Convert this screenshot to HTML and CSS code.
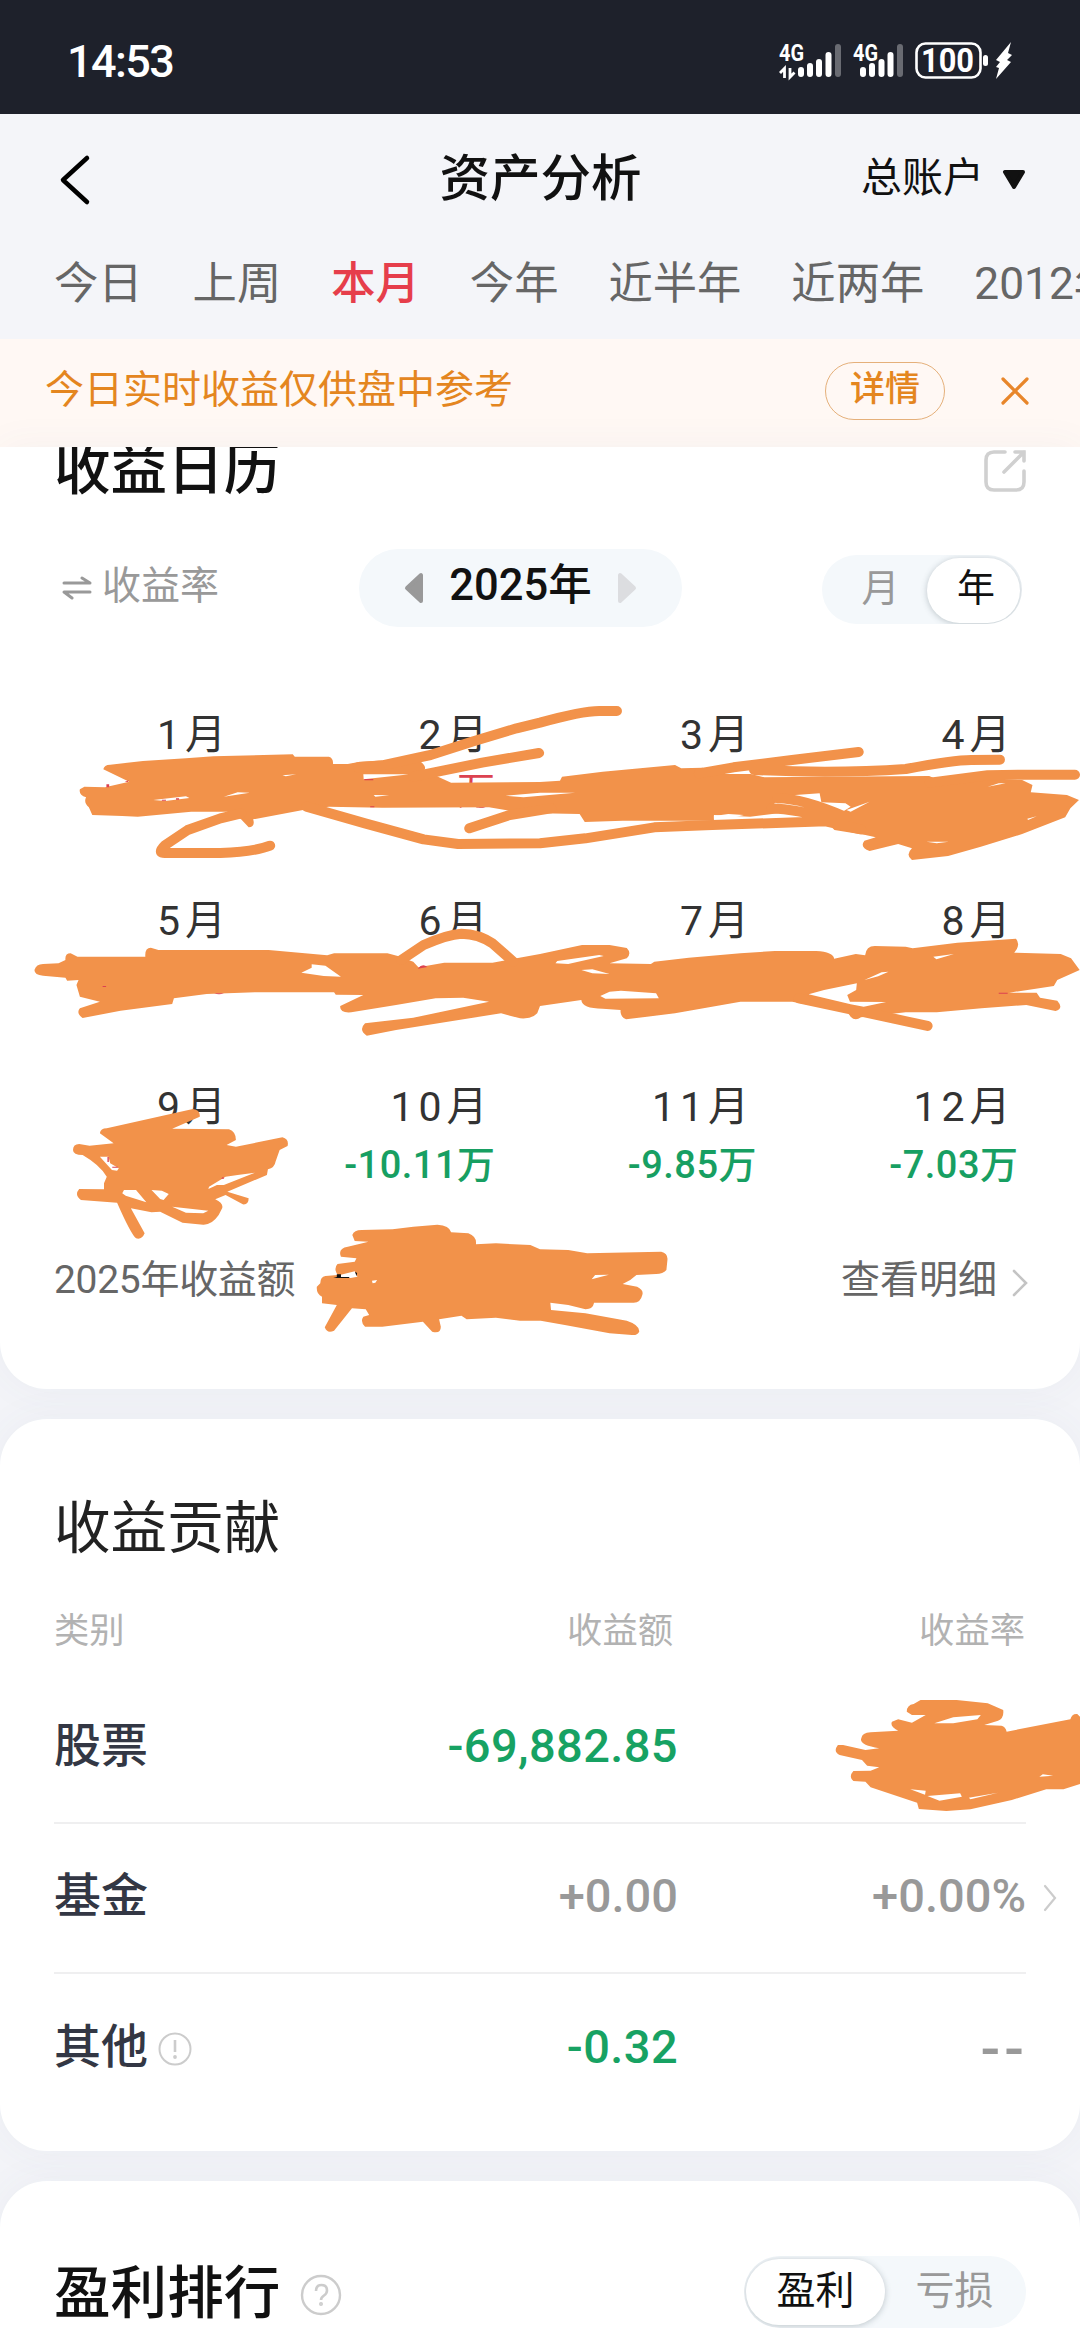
FILE: index.html
```html
<!DOCTYPE html>
<html lang="zh-CN">
<head>
	<meta charset="UTF-8">
	<title>资产分析</title>
	<link rel="stylesheet" href="styles.css">
</head>
<body>
	<div id="statusbar">
		<span class="clock">14:53</span>
		<svg class="phone" width="240" height="44" viewBox="776 38 240 44">
			<g fill="#fff" font-family="Roboto" font-weight="700">
				<text x="779" y="60" font-size="23" textLength="25" lengthAdjust="spacingAndGlyphs">4G</text>
				<text x="853" y="60" font-size="23" textLength="25" lengthAdjust="spacingAndGlyphs">4G</text>
				<text x="921" y="71" font-size="33" textLength="53" lengthAdjust="spacingAndGlyphs">100</text>
			</g>
			<path d="M780 72l4.500-4.500V77M794.500 71.500L790 76v-9" fill="none" stroke="#fff" stroke-width="2.800"/>
			<g stroke="#fff" stroke-width="6" stroke-linecap="round">
				<path d="M801 69v4M810 65v8M819 61v12M828.500 54v19"/>
				<path d="M863 69v4M872 65v8M881.500 61v12M890.500 54v19"/>
				<path d="M838 46v27M900 46v27" stroke="#696b72"/>
			</g>
			<rect x="916.500" y="42.500" width="64" height="34" rx="9" fill="none" stroke="#fff" stroke-width="2.600"/>
			<rect x="983" y="54" width="5" height="11" rx="2.500" fill="#fff"/>
			<path d="M1011 41l-15 18 4 2-4 5 3 1-3 11 15-17-4-2 5-5-4-2z" fill="#fff"/>
		</svg>
	</div>

	<div id="header">
		<svg class="back" width="34" height="52" viewBox="0 0 34 52"><path d="M30 4L6 26l24 22" fill="none" stroke="#000" stroke-width="4.500" stroke-linecap="round" stroke-linejoin="round"/></svg>
		<h1>资产分析</h1>
		<div class="account">总账户<svg width="24" height="20" viewBox="0 0 24 20"><path d="M3 2h18L12 17z" fill="#111" stroke="#111" stroke-width="4" stroke-linejoin="round"/></svg></div>
	</div>

	<div id="tabs">
		<span>今日</span><span>上周</span><span class="active">本月</span><span>今年</span><span>近半年</span><span>近两年</span><span>2012年</span>
	</div>

	<div id="notice">
		<span class="text">今日实时收益仅供盘中参考</span>
		<span class="detail">详情</span>
		<svg width="28" height="28" viewBox="0 0 28 28"><path d="M2 2l24 24M26 2L2 26" stroke="#e8862a" stroke-width="3.200" stroke-linecap="round"/></svg>
	</div>

	<div class="card calendar">
		<div class="title">
			<h2>收益日历</h2>
			<svg width="42" height="42" viewBox="0 0 42 42" fill="none" stroke="#d0d0d0" stroke-width="3.600" stroke-linecap="round"><path d="M21 2H10Q2 2 2 10v22q0 8 8 8h22q8 0 8-8V21M31 2h9v9M40 2L20 22"/></svg>
		</div>
		<div class="tools">
			<div class="switch"><svg width="30" height="24" viewBox="0 0 30 24" fill="none" stroke="#999" stroke-width="3" stroke-linecap="round" stroke-linejoin="round"><path d="M2 7h26l-8-5M28 16H2l8 6"/></svg><span>收益率</span></div>
			<div class="year">
				<svg width="20" height="32" viewBox="0 0 20 32"><path d="M17 3v26L3 16z" fill="#999" stroke="#999" stroke-width="4" stroke-linejoin="round"/></svg>
				<span>2025年</span>
				<svg width="20" height="32" viewBox="0 0 20 32"><path d="M3 3v26l14-13z" fill="#dcdde0" stroke="#dcdde0" stroke-width="4" stroke-linejoin="round"/></svg>
			</div>
			<div class="toggle period"><span>月</span><span class="on">年</span></div>
		</div>
		<div class="months">
			<div><p>1月</p></div>
			<div><p>2月</p><b class="up">万</b></div>
			<div><p>3月</p></div>
			<div><p>4月</p></div>
			<div><p>5月</p></div>
			<div><p>6月</p></div>
			<div><p>7月</p></div>
			<div><p>8月</p></div>
			<div><p>9月</p></div>
			<div><p>10月</p><b>-10.11万</b></div>
			<div><p>11月</p><b>-9.85万</b></div>
			<div><p>12月</p><b>-7.03万</b></div>
		</div>
		<div class="total">
			<span class="sum">2025年收益额</span>
			<span>查看明细</span>
			<svg width="16" height="28" viewBox="0 0 16 28"><path d="M2 2l12 12L2 26" fill="none" stroke="#c4c4c4" stroke-width="2.600" stroke-linecap="round"/></svg>
		</div>
	</div>

	<div class="card contribution">
		<h2>收益贡献</h2>
		<div class="row head"><span>类别</span><span>收益额</span><span>收益率</span></div>
		<div class="row"><span>股票</span><b class="down">-69,882.85</b><b></b></div>
		<div class="row">
			<span>基金</span><b>+0.00</b><b>+0.00%</b>
			<svg class="more" width="14" height="28" viewBox="0 0 14 28"><path d="M2 2l10 12L2 26" fill="none" stroke="#ccc" stroke-width="2.200" stroke-linecap="round"/></svg>
		</div>
		<div class="row">
			<span>其他<svg width="34" height="34" viewBox="0 0 34 34"><circle cx="17" cy="17" r="15.500" fill="none" stroke="#ccc" stroke-width="2"/><path d="M17 8v12" stroke="#ccc" stroke-width="2.600"/><circle cx="17" cy="25" r="1.900" fill="#ccc"/></svg></span>
			<b class="down">-0.32</b><b class="none">--</b>
		</div>
	</div>

	<div class="card ranking">
		<h2>盈利排行</h2>
		<svg width="42" height="42" viewBox="0 0 42 42" fill="none" stroke="#ccc"><circle cx="21" cy="21" r="19" stroke-width="2.400"/><path d="M16 17q0-6 5.500-6t5.500 5.500q0 3-3 5t-3 4.500" stroke-width="2.600"/><circle cx="21" cy="30" r="1.200" stroke-width="1.600"/></svg>
		<div class="toggle rank"><span class="on">盈利</span><span>亏损</span></div>
	</div>

	<!-- marker strokes over the private amounts -->
	<svg id="marker" width="1080" height="2340" viewBox="0 0 1080 2340">
		<g transform="translate(0 680) scale(.34439 .33333)">
			<path d="M300 268Q302 254 320 254L415 243L540 235L620 229L850 223L856 230L955 230Q968 234 967 252L1010 252L1045 245L1100 242L1222 245Q1240 262 1232 270L1215 283L1055 283L1056 298L1170 285L1240 275L1310 308L1568 306L1626 302L1632 290L1750 275L1960 255L1978 265L2040 263L2108 282L2180 282L2220 292L2398 290L2698 288L2713 295L2968 300L2998 315L2993 337L3098 345L3133 360L3108 385L3093 412L2968 462L2848 500L2753 528L2648 540Q2628 525 2648 505L2608 492L2525 513Q2495 502 2510 482L2543 472L2513 465L2423 450L2400 425L2470 380L2455 370L2385 367L2380 340L2310 345L2248 370L2250 380L2260 400L2178 410L2073 405L2073 422L1808 422L1698 426L1683 402L1568 400L1480 392L1420 382L1110 383L955 380L880 390L735 418Q742 440 722 442L700 418L660 395L555 395L400 410L355 408L268 405L258 382Q242 368 250 352Q228 345 232 328L245 320L305 322L375 305Z"/>
			<path class="line" d="M1040 262L1110 256L1250 225L1370 185L1500 145L1568 128Q1690 93 1740 93L1791 93M1200 290L1400 248L1565 219M2030 280L2130 262L2300 240L2493 216M2190 270Q2430 282 2630 267Q2770 240 2820 240L2903 239M2700 308L2868 286L2968 284L3121 284"/>
			<path class="line" d="M700 400L640 415L545 450L480 495Q455 520 480 519L640 519Q740 515 784 497M890 380L1060 430L1230 478L1330 492L1568 490L1700 475L1900 442L2068 435L2398 424L2500 448M1363 445L1480 405L1600 385M2258 355Q2330 355 2458 412M2240 385Q2310 388 2410 415"/>
			<path d="M100 870Q105 852 125 852L170 850L190 840Q188 820 205 820L225 830L350 830L422 830Q420 803 438 803L460 810L780 810L950 826L970 820L1125 820L1155 828L1200 845L1215 862L1290 848L1430 848L1500 835L1568 822L1690 795L1770 795L1820 804Q1835 820 1820 835L1770 850L1890 852L1900 845L2000 833L2150 820L2250 813L2370 813Q2420 816 2422 836L2485 822L2512 826Q2515 798 2540 798L2630 800L2650 805L2780 788L2950 776Q2965 795 2945 818L3080 822L3110 835L3135 870L3070 900L3060 918L2930 938L3010 938L3020 953L3070 962Q3090 985 3065 993L2980 975L2850 985L2720 997L2630 997L2500 1012Q2483 1024 2470 1010L2460 995L2300 965L2150 965L1960 1000L1818 1018Q1800 1010 1802 990L1750 986Q1690 986 1688 960L1568 978L1560 1000Q1545 1018 1510 1015L1455 1000L1300 1025L1150 1050L1065 1067Q1040 1050 1060 1030L1200 1013L1420 965L1345 953L1265 955L1150 975L1020 997Q985 1000 988 978L1055 945L975 944L970 937L740 937L600 942L505 955L500 972L350 992L240 1014Q220 1000 232 985L290 965L232 950L222 915L228 900L195 902L190 893L125 887Q100 885 100 870Z"/>
			<path class="line" d="M1165 840L1230 795Q1300 763 1340 761Q1390 762 1430 790L1490 845M2320 955L2480 990L2693 1038"/>
			<path class="hole" d="M875 878L905 863L905 853L945 857L990 890L940 888ZM1743 948L1770 935L1803 932L1905 940L1913 955L1758 956ZM2348 943L2393 930L2488 910L2486 930L2460 945L2468 965L2573 966L2508 980L2470 973ZM1613 850L1618 843L1740 825L1753 828L1650 852ZM1688 870L1720 868L1770 882L1720 880ZM2710 830L2770 822L2719 838ZM2510 900L2560 877L2580 875L2550 889ZM820 286L860 283L830 289ZM650 350L690 337L725 338ZM445 360L540 349L550 354L480 363ZM1085 345L1130 346L1090 350ZM1468 347L1568 338L1670 338L1520 352ZM2073 408L2115 402L2160 405L2110 417L2073 416ZM2458 390L2525 365L2470 395ZM2690 485L2755 485L2720 490ZM2983 416L3010 409L2985 420ZM2868 320L2900 310L2920 310Z"/>
			<path class="red" d="M309 313h8v9h-8zM362 305l12-4-3 5zM470 359h12v3h-12zM511 355h9v4h-9zM1058 297h26v4h-26zM1075 379h12v3h-12zM1213 866q14-18 28-5zM622 940q14 6 28 0zM298 918h10v3h-10zM2900 938h26v3h-26z"/>
		</g>
		<g transform="translate(0 1050) scale(.34439 .33333)">
			<path d="M290 250Q292 235 310 235L560 177Q582 180 580 200L500 236L665 238Q685 245 685 270L658 285L685 290L820 262Q840 268 835 288L812 300L800 335Q798 352 778 358L775 375L660 425L722 445Q722 465 705 463L655 435L625 448Q650 460 645 475L635 495Q615 525 590 524L530 518L465 485L440 487L380 475L420 550Q412 570 395 565Q380 552 340 458L235 450Q215 435 230 417L302 418L302 400L310 380Q290 345 240 315Q212 315 212 300Q212 282 230 282L260 287L330 280Z"/>
			<path class="hole" d="M355 430L360 420L395 420L425 457L365 437ZM440 420L470 422L490 432L475 450L465 447ZM500 470L605 482L590 490L540 488ZM643 388L655 380L690 375L740 368L650 405L630 405L605 417L607 410ZM290 320L315 320L320 340L345 355L340 362L325 360Z"/>
			<path class="red" d="M312 321h4v15h-4zM326 350h16v3h-16zM642 386l6-6 3 6z"/>
			<path d="M1023 555Q1028 540 1050 540L1140 538L1200 530L1270 524Q1305 526 1310 547L1360 550Q1385 560 1382 583L1440 580L1540 585L1568 598L1650 600L1705 610L1920 605Q1940 610 1938 630L1935 660Q1925 672 1905 672L1848 675L1830 690L1808 702L1850 710Q1870 720 1865 735Q1860 758 1840 758L1725 758Q1722 777 1700 778L1650 765L1598 758L1600 780L1700 790L1820 812Q1858 825 1856 845Q1850 857 1835 855L1770 850L1640 825L1570 812L1510 812L1440 803L1355 808L1340 797L1275 808L1280 830Q1280 852 1255 845L1228 815L1110 830L1060 830Q1045 815 1055 800L1072 795L1062 778L1022 775L970 842Q950 852 943 832L978 765L935 760L935 740Q918 732 920 710L930 700Q930 680 945 678L980 675Q968 655 980 642L1030 635L1035 625L990 620Q980 595 1010 590L1070 575L1030 573Z"/>
			<path class="hole" d="M990 674L1030 664L1038 680L1018 684L990 681ZM1080 692L1095 690L1090 698L1082 700ZM1718 688L1728 675L1768 674Z"/>
			<path d="M978 673h12v8h24v3h-46l10-3zM1031 665l6 4-2 10z" fill="#111"/>
		</g>
		<g transform="translate(540 1430) scale(.34439 .33333)">
			<path d="M1065 845Q1065 825 1085 822L1105 810L1210 810L1300 820L1345 840Q1348 865 1330 872L1290 885L1340 887Q1352 890 1355 905L1540 868Q1545 850 1560 852L1568 860L1568 1062L1520 1078L1470 1078L1370 1110L1250 1138L1180 1143L1100 1137L1095 1118L960 1072L945 1055L910 1053Q895 1040 910 1023L960 1022L985 1012L950 1007L935 990L870 975Q850 965 865 945L880 945L945 960L985 955Q925 945 933 925Q935 908 960 907L1040 902Q1015 890 1022 875L1040 868L1080 878L1120 855L1080 855Z"/>
			<path class="hole" d="M1145 880L1200 862L1280 855L1270 868L1200 880ZM1125 1098L1220 1090L1225 1100L1160 1112ZM1245 1103L1330 1088L1250 1108ZM1450 1040L1460 1033L1490 1037ZM1075 1078L1120 1082L1118 1094Z"/>
		</g>
	</svg>
</body>
</html>
```
FILE: styles.css
```css
html {
	margin:0px;
	padding:0px;
}

body {
	margin:0px;
	padding:0px;
	position:relative;
	width:1080px;
	height:2340px;
	overflow:hidden;
	background:#f3f4f8;
	color:#111;
	font-family:Roboto,"Noto Sans CJK SC",sans-serif;
	font-size:39px;
}

h1, h2, p {
	margin:0px;
	font-weight:500;
}

svg {
	display:block;
	flex:none;
}

#statusbar {
	display:flex;
	align-items:center;
	justify-content:space-between;
	box-sizing:border-box;
	height:114px;
	padding:8px 64px 0px 67px;
	background:#1e212b;
}

#statusbar .clock {
	color:#fff;
	font-size:45px;
	font-weight:500;
	letter-spacing:-1.600px;
}

#header {
	display:grid;
	grid-template-columns:1fr auto 1fr;
	align-items:center;
	height:126px;
	padding:0px 54px 0px 57px;
	background:#f4f5f9;
}

#header .back {
	margin-top:6px;
}

#header h1 {
	font-size:50.500px;
	line-height:70px;
	padding:3px 2px 0px 0px;
}

#header .account {
	display:flex;
	align-items:center;
	justify-content:flex-end;
	gap:18px;
	font-size:41px;
	line-height:60px;
	padding-top:2px;
}

#header .account svg {
	margin-top:4px;
}

#tabs {
	display:flex;
	gap:50px;
	height:99px;
	padding-left:54px;
	background:#f4f5f9;
	color:#666;
	font-size:44.300px;
	line-height:88px;
	white-space:nowrap;
	overflow:hidden;
	box-sizing:border-box;
}

#tabs .active {
	color:#e63e4b;
	font-weight:500;
}

#notice {
	display:flex;
	align-items:center;
	box-sizing:border-box;
	height:108px;
	padding:0px 51px 2px 45px;
	background:#fff8f4;
	color:#e4861f;
}

#notice .text {
	flex:1;
	line-height:60px;
	padding-bottom:4px;
}

#notice .detail {
	box-sizing:border-box;
	width:120px;
	height:58px;
	margin:0px 56px 2px 0px;
	border:1.500px solid #e5b07a;
	border-radius:29px;
	font-size:35px;
	line-height:54px;
	text-align:center;
	font-weight:500;
}

#notice svg {
	margin-bottom:2px;
}

.card {
	background:#fff;
	border-radius:47px;
	margin-bottom:30px;
	padding:0px 54px;
	box-shadow:0 0 40px rgba(80,90,130,0.05);
}

.card h2 {
	font-size:56.600px;
	line-height:70px;
}

.calendar {
	height:942px;
	box-sizing:border-box;
	border-radius:0px 0px 47px 47px;
	overflow:hidden;
}

.calendar .title {
	display:flex;
	align-items:center;
	justify-content:space-between;
	margin-top:-12px;
	height:70px;
}

.calendar .title svg {
	margin-top:2px;
}

.tools {
	display:grid;
	grid-template-columns:305px 323px 1fr;
	align-items:center;
	margin-top:44px;
	height:78px;
}

.tools .switch {
	display:flex;
	align-items:center;
	gap:10px;
	padding-left:8px;
	color:#999;
}

.tools .switch span {
	line-height:60px;
	padding-bottom:4px;
}

.tools .year {
	display:flex;
	align-items:center;
	justify-content:center;
	gap:25px;
	height:78px;
	border-radius:39px;
	background:#f4f8fb;
	font-size:43.500px;
	font-weight:500;
}

.tools .year span {
	line-height:60px;
	padding-bottom:5px;
}

.toggle {
	display:flex;
	background:#f4f8fb;
	color:#999;
	border-radius:36px;
	overflow:hidden;
	box-sizing:border-box;
	padding:3px 2px;
	text-align:center;
}

.toggle span {
	flex:1;
	border-radius:34px;
}

.toggle .on {
	background:#fff;
	color:#111;
	box-shadow:0 1px 6px rgba(60,80,90,0.3);
}

.period {
	width:200px;
	height:69px;
	justify-self:end;
	margin:3px 4px 0px 0px;
	padding-bottom:1px;
	font-size:38px;
	line-height:60px;
}

.period span:first-child {
	padding-left:10px;
}

.period .on {
	text-indent:5px;
}

/* right edges of the cells follow the month column */
.months {
	display:grid;
	grid-template-columns:231px 261.500px 261.500px 261.500px;
	grid-template-rows:186px 186px 185px;
	margin:78px -54px 0px;
	text-align:right;
}

.months p {
	color:#333;
	font-size:41px;
	font-weight:400;
	line-height:60px;
	letter-spacing:5px;
}

.months b {
	display:block;
	color:#179f62;
	font-size:38px;
	font-weight:500;
	line-height:57px;
	letter-spacing:0.500px;
	margin-right:-3px;
}

.months .up {
	color:#dc4250;
	font-weight:400;
	line-height:53px;
}

.total {
	display:flex;
	align-items:center;
	height:40px;
	color:#666;
}

.total span {
	line-height:40px;
	padding-bottom:4px;
}

.total .sum {
	flex:1;
	letter-spacing:-0.300px;
}

.total svg {
	margin:2px 0px 0px 15px;
}

.total svg {
	margin-right:-2px;
}

.contribution {
	box-sizing:border-box;
	height:732px;
	padding-top:75px;
}

.contribution h2 {
	color:#222;
	font-weight:400;
}

.row {
	display:grid;
	position:relative;
	grid-template-columns:250px 374px 1fr;
	align-items:center;
	box-sizing:border-box;
	height:150px;
	border-bottom:2px solid #efeff0;
	font-size:47px;
	line-height:70px;
}

.row:last-child {
	border-bottom:0px;
}

.row span {
	display:flex;
	align-items:center;
	gap:10px;
	color:#333744;
	font-weight:500;
	padding-bottom:4px;
}

.row span svg {
	margin-top:3px;
}

.row b {
	color:#999;
	font-weight:500;
	text-align:right;
	padding-bottom:4px;
}

.row .down {
	color:#17a263;
	letter-spacing:0.400px;
}

.row .none {
	font-size:58px;
	letter-spacing:4px;
	margin-right:-2px;
	padding-bottom:0px;
}

.row .more {
	position:absolute;
	right:-31px;
	top:60px;
}

.row.head {
	height:50px;
	line-height:50px;
	margin:42px 0px 18px;
	border:0px;
	font-size:35.300px;
}

.row.head span {
	color:#b2b2b2;
	font-weight:400;
}

.row.head span + span {
	justify-content:flex-end;
	padding-right:1px;
}

.row.head span:nth-child(2) {
	padding-right:5px;
}

.ranking {
	display:flex;
	align-items:center;
	box-sizing:border-box;
	height:220px;
	padding-top:75px;
	padding-bottom:73px;
}

.ranking h2 {
	padding-top:4px;
}

.ranking svg {
	margin:5px 0px 0px 20px;
}

.rank {
	width:282px;
	height:72px;
	margin-left:auto;
	line-height:64px;
}

#marker {
	position:absolute;
	left:0px;
	top:0px;
	fill:#f2924a;
}

#marker .line {
	fill:none;
	stroke:#f2924a;
	stroke-width:30px;
	stroke-linecap:round;
	stroke-linejoin:round;
}

#marker .hole {
	fill:#fff;
}

#marker .red {
	fill:#dc4250;
}
```
